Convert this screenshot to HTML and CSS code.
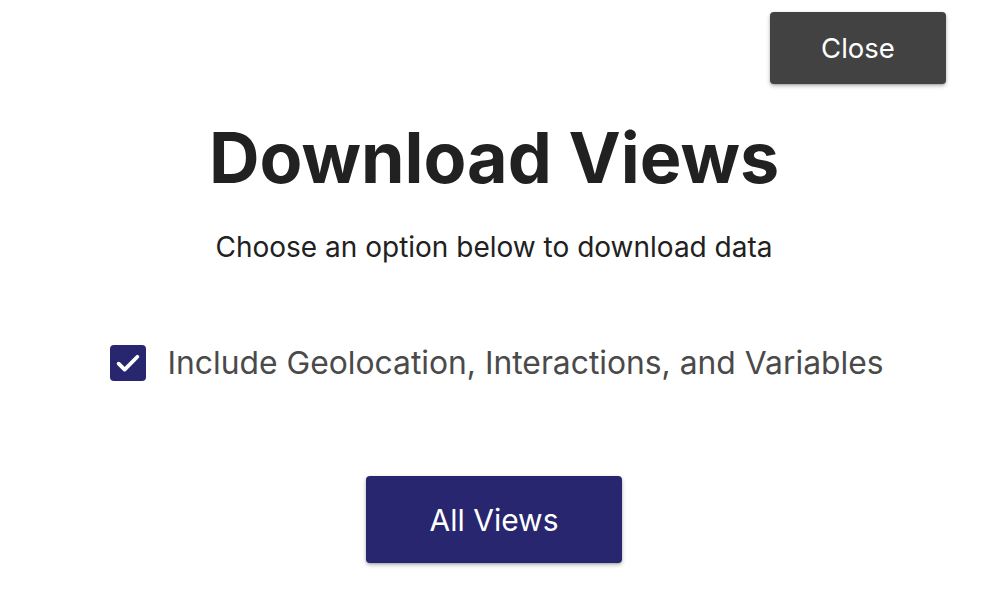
FILE: index.html
```html
<!DOCTYPE html>
<html>
<head>
<meta charset="utf-8">
<link rel="stylesheet" href="styles.css">
</head>
<body>
<div class="page">
  <div class="topbar">
    <button class="btn btn-close">Close</button>
  </div>
  <h1 class="title">Download Views</h1>
  <p class="subtitle">Choose an option below to download data</p>
  <label class="option">
    <span class="checkbox">
      <svg width="30" height="30" viewBox="0 0 24 24"><path d="M4.5 12.5l4.8 4.8L19.5 7" fill="none" stroke="#fff" stroke-width="3" stroke-linecap="round" stroke-linejoin="round"/></svg>
    </span>
    <span class="option-label">Include Geolocation, Interactions, and Variables</span>
  </label>
  <div class="actions">
    <button class="btn btn-primary">All Views</button>
  </div>
</div>
</body>
</html>
```
FILE: styles.css
```css
html, body {
  margin: 0;
  padding: 0;
  background: #fff;
}
body {
  font-family: Inter, "Noto Sans", sans-serif;
  color: #212121;
}
.page {
  width: 988px;
  height: 596px;
  display: flex;
  flex-direction: column;
  align-items: center;
}
.topbar {
  align-self: stretch;
  display: flex;
  justify-content: flex-end;
  padding: 12px 42px 0 0;
}
.btn {
  border: none;
  font-family: Inter, "Noto Sans", sans-serif;
  color: #fff;
  border-radius: 4px;
  cursor: pointer;
  box-shadow: 0 2px 4px rgba(0,0,0,0.25), 0 1px 2px rgba(0,0,0,0.15);
}
.btn-close {
  width: 176px;
  height: 72px;
  background: #424242;
  font-size: 27.5px;
}
.title {
  margin: 34px 0 0;
  font-size: 70px;
  font-weight: 700;
  line-height: 80px;
  color: #212121;
}
.subtitle {
  margin: 31px 0 0;
  font-size: 28px;
  line-height: 36px;
  color: #212121;
}
.option {
  margin-top: 78px;
  margin-left: 5px;
  display: flex;
  align-items: center;
  gap: 22px;
}
.checkbox {
  width: 36px;
  height: 36px;
  border-radius: 4px;
  background: #27266f;
  display: flex;
  align-items: center;
  justify-content: center;
}
.option-label {
  font-size: 31.8px;
  color: #4a4a4a;
}
.actions {
  margin-top: 94px;
}
.btn-primary {
  width: 256px;
  height: 87px;
  background: #27266f;
  font-size: 30px;
}
```
